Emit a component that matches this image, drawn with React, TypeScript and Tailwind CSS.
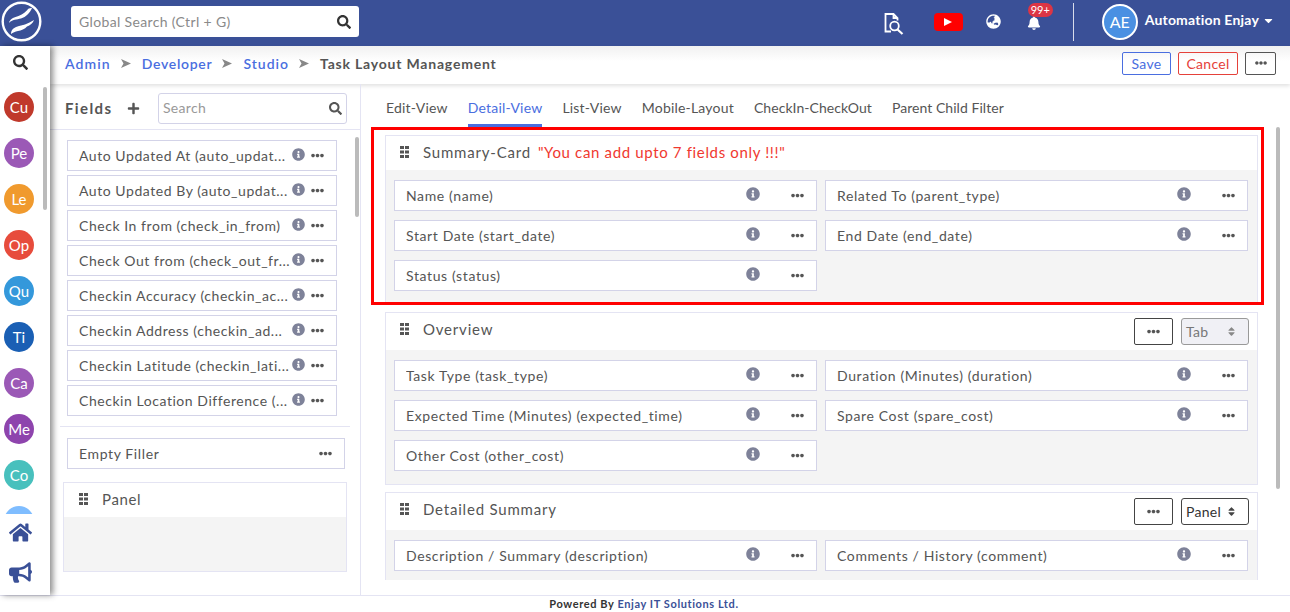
import {
  FaBell,
  FaBullhorn,
  FaCaretDown,
  FaEllipsisH,
  FaGlobeAsia,
  FaHome,
  FaInfoCircle,
  FaPlus,
  FaSearch,
  FaSort,
} from 'react-icons/fa'

const avatars = [
  ['Cu', 'bg-[#c0392b]'],
  ['Pe', 'bg-[#9b59b6]'],
  ['Le', 'bg-[#f09a2e]'],
  ['Op', 'bg-[#e74c3c]'],
  ['Qu', 'bg-[#3498db]'],
  ['Ti', 'bg-[#1a5fb4]'],
  ['Ca', 'bg-[#9b59b6]'],
  ['Me', 'bg-[#8e44ad]'],
  ['Co', 'bg-[#48c0bd]'],
  ['', 'bg-[#7fbdff]'],
]

const fieldList = [
  'Auto Updated At (auto_updat...',
  'Auto Updated By (auto_updat...',
  'Check In from (check_in_from)',
  'Check Out from (check_out_fr...',
  'Checkin Accuracy (checkin_ac...',
  'Checkin Address (checkin_ad...',
  'Checkin Latitude (checkin_lati...',
  'Checkin Location Difference (...',
]

const tabs = [
  ['Edit-View', 'tracking-[0.2px]'],
  ['Detail-View', 'tracking-[0.2px]'],
  ['List-View', 'tracking-[0.2px]'],
  ['Mobile-Layout', 'tracking-[0.2px]'],
  ['CheckIn-CheckOut', 'tracking-[0.05px]'],
  ['Parent Child Filter', 'tracking-[0.05px]'],
]

function Grip() {
  return (
    <svg width="9" height="12" viewBox="0 0 9 12" className="shrink-0 fill-[#555]">
      <rect x="0" y="0" width="4" height="3" />
      <rect x="5" y="0" width="4" height="3" />
      <rect x="0" y="4.5" width="4" height="3" />
      <rect x="5" y="4.5" width="4" height="3" />
      <rect x="0" y="9" width="4" height="3" />
      <rect x="5" y="9" width="4" height="3" />
    </svg>
  )
}

function Logo() {
  return (
    <svg width="42" height="42" viewBox="0 0 42 42">
      <circle cx="20.5" cy="20.5" r="18.8" fill="none" stroke="white" strokeWidth="2.4" />
      <path d="M8 22 C9 18 12 16.5 16 15.5 C20 14.5 25 11 27 8 C28 7 30 7 31 7 C29 12 25 16 20 17.5 C16 18.5 11 18.5 8 22 Z" fill="white" />
      <path d="M10 33 C10 28 14 26 18 25 L24 23.5 C27 22.5 30 20.5 33 19 C32 22 29 24.5 26 25.5 C24 28 20 29.5 17 30 C14 30.5 12 31.5 10 33 Z" fill="white" />
    </svg>
  )
}

function FileLens() {
  return (
    <svg width="20" height="22" viewBox="0 0 20 22" fill="none" stroke="white" strokeWidth="1.8" className="mt-[4px]">
      <path d="M7 18.5 H1.5 V1 H9.5 L13.5 5 V7.5 M9.5 1 V5 H13.5" />
      <circle cx="10.5" cy="13" r="4.3" />
      <path d="M13.5 16.5 L18.5 21" strokeWidth="2.2" />
    </svg>
  )
}

function Crumb() {
  return (
    <svg width="10" height="9" viewBox="0 0 10 9" className="ml-[10px] mr-[11px] fill-[#888]">
      <path d="M0 0 L10 4.5 L0 9 L2.5 4.5 Z" />
    </svg>
  )
}

function Field({ label }: { label: string }) {
  return (
    <div className="flex h-[31px] items-center border border-[#d3d3e8] bg-white pl-[11px] pr-[12px]">
      <span className="flex-1 truncate text-[#555]">{label}</span>
      <FaInfoCircle className="mr-[31px] mb-[3px] text-[14px] text-[#7e8299]" />
      <FaEllipsisH className="text-[13px] text-[#555]" />
    </div>
  )
}

function Panel({
  title,
  note,
  kind,
  disabled,
  fields,
  className,
}: {
  title: string
  note?: string
  kind?: string
  disabled?: boolean
  fields: string[]
  className: string
}) {
  return (
    <div className={`shrink-0 border border-[#e4e4f3] bg-[#f4f4f4] ${className}`}>
      <div className={`flex items-start bg-white pl-[14px] pr-2 ${kind ? 'h-[37px]' : 'h-[34px]'}`}>
        <div className="flex h-[32px] items-center">
          <Grip />
          <span className="ml-[14px] text-[15px] tracking-[0.8px] text-[#555]">{title}</span>
          {note && <span className="ml-[7px] text-[15px] tracking-[0.65px] text-[#f0382f]">{note}</span>}
        </div>
        {kind && (
          <div className="ml-auto mt-[5px] flex items-center gap-2">
            <button className="flex h-[27px] w-[39px] items-center justify-center rounded-[2px] border border-[#444] bg-white">
              <FaEllipsisH className="text-[13px] text-[#555]" />
            </button>
            <div
              className={`flex h-[27px] w-[68px] items-center justify-between rounded-[3px] border pl-[4px] pr-[11px] tracking-[0.3px] ${
                disabled ? 'border-[#999] bg-[#f0f0f5] text-[#777]' : 'border-[#444] bg-white text-[#333]'
              }`}
            >
              <span>{kind}</span>
              <FaSort className={`text-[11px] ${disabled ? 'text-[#888]' : 'text-[#444]'}`} />
            </div>
          </div>
        )}
      </div>
      <div className="grid grid-cols-2 gap-x-2 gap-y-[9px] pl-2 pr-[9px] pt-[10px]">
        {fields.map((f) => (
          <Field key={f} label={f} />
        ))}
      </div>
    </div>
  )
}

export default function App() {
  return (
    <div className="flex h-[612px] w-[1290px] flex-col overflow-hidden bg-white font-['Lato','Open_Sans',sans-serif] text-[14px] tracking-[0.62px] text-[#555]">
      {/* Top bar */}
      <header className="flex h-[46px] shrink-0 items-center bg-[#3a5097] pb-[3px] pl-[1px] text-white">
        <Logo />
        <div className="ml-[28px] flex h-[31px] w-[288px] items-center justify-between rounded-[3px] bg-white pl-2 pr-2 tracking-[0.35px]">
          <span className="text-[14px] text-[#8a8a8a]">Global Search (Ctrl + G)</span>
          <FaSearch className="text-[14px] text-[#333]" />
        </div>
        <div className="ml-auto flex items-center">
          <FileLens />
          <div className="ml-[30px] flex h-[18px] w-[29px] items-center justify-center rounded-[4px] bg-[#f00]">
            <svg width="8" height="8" viewBox="0 0 8 8" className="fill-white">
              <path d="M0 0 L8 4 L0 8 Z" />
            </svg>
          </div>
          <FaGlobeAsia className="ml-[23px] text-[15px]" />
          <div className="relative ml-[26px] mt-[2px]">
            <FaBell className="text-[14px]" />
            <span className="absolute -top-[13px] left-[1px] rounded-[8px] bg-[#dc3545] px-[3px] text-[11px] leading-[14px] tracking-normal">
              99+
            </span>
          </div>
          <div className="ml-[32px] h-[38px] w-px bg-white/80" />
          <div className="ml-[28px] flex h-[36px] w-[36px] items-center justify-center rounded-full border-2 border-white bg-[#4a90e2] text-[16px] tracking-normal">
            AE
          </div>
          <span className="mb-[4px] ml-[7px] text-[14px] font-bold tracking-[0.2px]">Automation Enjay</span>
          <FaCaretDown className="mb-[2px] ml-[3px] mr-[15px] text-[13px]" />
        </div>
      </header>

      <div className="flex min-h-0 flex-1">
        {/* Icon rail */}
        <aside className="z-10 flex w-[50px] shrink-0 flex-col bg-white shadow-[3px_0_6px_rgba(0,0,0,0.45)]">
          <div className="flex h-[38px] shrink-0 items-center justify-center pb-[6px] pr-[10px]">
            <FaSearch className="text-[15px] text-[#333]" />
          </div>
          <div className="relative flex h-[430px] shrink-0 flex-col gap-4 overflow-hidden pl-1 pt-[8px] tracking-normal">
            {avatars.map(([label, bg], i) => (
              <div
                key={i}
                className={`flex h-[30px] w-[30px] shrink-0 items-center justify-center rounded-full text-[15px] text-white ${bg}`}
              >
                {label}
              </div>
            ))}
            <div className="absolute right-[3px] top-[3px] h-[123px] w-1 rounded bg-[#bbb]" />
          </div>
          <div className="flex flex-col items-center gap-[17px] pr-[10px] pt-[7px] text-[#3a5097]">
            <FaHome className="text-[23px]" />
            <FaBullhorn className="text-[23px]" />
          </div>
        </aside>

        <div className="flex min-w-0 flex-1 flex-col">
          {/* Breadcrumb */}
          <div className="flex h-[38px] shrink-0 items-center bg-gradient-to-b from-[#f1f1f1] to-white to-40% pb-1 pl-[15px] pr-[14px] shadow-[0_2px_4px_rgba(0,0,0,0.12)]">
            <span className="font-semibold tracking-[1.1px] text-[#4a6ee0]">Admin</span>
            <Crumb />
            <span className="font-semibold tracking-[0.7px] text-[#4a6ee0]">Developer</span>
            <Crumb />
            <span className="font-semibold tracking-[1px] text-[#4a6ee0]">Studio</span>
            <Crumb />
            <span className="font-bold tracking-[0.8px] text-[#555]">Task Layout Management</span>
            <div className="ml-auto flex items-center gap-[7px] tracking-[0.3px]">
              <button className="h-[23px] w-[49px] rounded-[2px] border border-[#4a6ee0] text-[#4a6ee0]">Save</button>
              <button className="h-[23px] w-[60px] rounded-[2px] border border-[#e5413a] text-[#e5413a]">Cancel</button>
              <button className="flex h-[23px] w-[31px] items-center justify-center rounded-[2px] border border-[#555]">
                <FaEllipsisH className="text-[12px] text-[#555]" />
              </button>
            </div>
          </div>

          <div className="flex min-h-0 flex-1">
            {/* Fields column */}
            <div className="flex w-[311px] shrink-0 flex-col border-r border-[#e4e4f3] pt-[9px]">
              <div className="flex h-[37px] shrink-0 items-center border-b border-[#e4e4f3] pb-[6px] pl-[15px] pr-[13px]">
                <span className="text-[15px] font-bold tracking-[1.4px] text-[#555]">Fields</span>
                <FaPlus className="ml-[14px] text-[13px] text-[#555]" />
                <div className="ml-auto flex h-[31px] w-[189px] items-center justify-between rounded-[3px] border border-[#d3d3e8] pl-[4px] pr-[4px] tracking-[0.3px]">
                  <span className="mb-[1px] text-[#999]">Search</span>
                  <FaSearch className="text-[13px] text-[#555]" />
                </div>
              </div>
              <div className="relative mx-[10px] flex shrink-0 flex-col gap-1 border-b border-[#e4e4f3] pb-[10px] pl-[7px] pr-[13px] pt-[10px] tracking-[0.55px]">
                {fieldList.map((f) => (
                  <div key={f} className="flex h-[31px] items-center border border-[#d3d3e8] pl-[11px] pr-[12px]">
                    <span className="min-w-0 flex-1 whitespace-nowrap">{f}</span>
                    <FaInfoCircle className="mr-[6px] mb-[3px] shrink-0 text-[13px] text-[#7e8299]" />
                    <FaEllipsisH className="shrink-0 text-[13px] text-[#555]" />
                  </div>
                ))}
                <div className="absolute -right-[9px] top-[7px] h-[80px] w-1 rounded bg-[#bbb]" />
              </div>
              <div className="ml-[17px] mr-[15px] mt-[11px] flex h-[31px] shrink-0 items-center justify-between border border-[#d3d3e8] pl-[11px] pr-[12px]">
                <span>Empty Filler</span>
                <FaEllipsisH className="text-[13px] text-[#555]" />
              </div>
              <div className="ml-[13px] mr-[13px] mt-[13px] h-[90px] shrink-0 border border-[#e4e4f3] bg-[#f4f4f4]">
                <div className="h-[34px] bg-white pl-[15px]">
                  <div className="flex h-[32px] items-center">
                    <Grip />
                    <span className="ml-[14px] text-[15px]">Panel</span>
                  </div>
                </div>
              </div>
            </div>

            {/* Layout editor */}
            <div className="relative flex min-w-0 flex-1 flex-col">
              <nav className="flex h-[43px] shrink-0 items-end gap-5 pl-[25px]">
                {tabs.map(([t, spacing]) => (
                  <span
                    key={t}
                    className={`${spacing} ${
                      t === 'Detail-View'
                        ? 'border-b-[3px] border-[#4a6ee0] pb-1 leading-[24px] text-[#4a6ee0]'
                        : 'border-b-[3px] border-transparent pb-1 leading-[24px] text-[#555]'
                    }`}
                  >
                    {t}
                  </span>
                ))}
              </nav>
              <div className="relative flex h-[453px] shrink-0 flex-col gap-[7px] overflow-hidden pl-6 pt-2 pr-[32px]">
                <Panel
                  title="Summary-Card"
                  note={'"You can add upto 7 fields only !!!"'}
                  fields={['Name (name)', 'Related To (parent_type)', 'Start Date (start_date)', 'End Date (end_date)', 'Status (status)']}
                  className="h-[170px]"
                />
                <Panel
                  title="Overview"
                  kind="Tab"
                  disabled
                  fields={['Task Type (task_type)', 'Duration (Minutes) (duration)', 'Expected Time (Minutes) (expected_time)', 'Spare Cost (spare_cost)', 'Other Cost (other_cost)']}
                  className="h-[173px]"
                />
                <Panel
                  title="Detailed Summary"
                  kind="Panel"
                  fields={['Description / Summary (description)', 'Comments / History (comment)']}
                  className="h-[173px]"
                />
                <div className="absolute right-[10px] top-0 h-[362px] w-1 rounded bg-[#bbb]" />
              </div>
              {/* Red annotation box */}
              <div className="absolute left-[10px] top-[43px] h-[178px] w-[893px] border-[3px] border-[#f00]" />
            </div>
          </div>
        </div>
      </div>

      <footer className="flex h-[17px] shrink-0 items-center justify-center border-t border-[#e4e4f3] pr-[2px] pt-[1px] text-[11px] font-bold tracking-[0.6px] text-[#333]">
        <span>Powered By</span>
        <span className="ml-[3px] text-[#3a5097]">Enjay IT Solutions Ltd.</span>
      </footer>
    </div>
  )
}
